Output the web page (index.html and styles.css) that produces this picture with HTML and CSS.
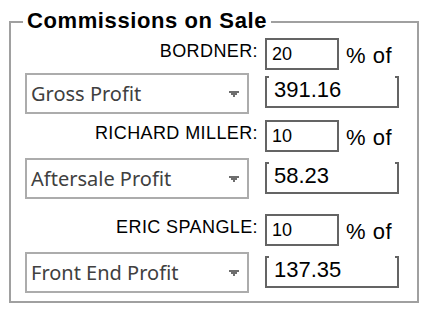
FILE: index.html
```html
<!DOCTYPE html>
<html>
  <head>
    <meta http-equiv="Content-Type" content="text/html; charset=UTF-8">
    <title>Commissions on Sale</title>
    <link rel="stylesheet" href="styles.css">
  </head>

  <body>

    <fieldset id="comisiones">
      <legend>Commissions on Sale</legend>

      <div class="reparto primero">
        <label class="nombre" for="pct1">BORDNER:</label>
        <input type="text" id="pct1" class="pct" value="20" size="3" maxlength="4">
        <span class="de">% of</span>
        <div class="lista">
          <span>Gross Profit</span>
          <svg class="flecha" width="10" height="6" viewBox="0 0 10 6"><polygon points="0,0 10,0 10,2 8,2 8,4 6,4 6,6 4,6 4,4 2,4 2,2 0,2"/></svg>
        </div>
        <div class="importe">391.16</div>
      </div>

      <div class="reparto segundo">
        <label class="nombre" for="pct2">RICHARD MILLER:</label>
        <input type="text" id="pct2" class="pct" value="10" size="3" maxlength="4">
        <span class="de">% of</span>
        <div class="lista">
          <span>Aftersale Profit</span>
          <svg class="flecha" width="10" height="6" viewBox="0 0 10 6"><polygon points="0,0 10,0 10,2 8,2 8,4 6,4 6,6 4,6 4,4 2,4 2,2 0,2"/></svg>
        </div>
        <div class="importe">58.23</div>
      </div>

      <div class="reparto tercero">
        <label class="nombre" for="pct3">ERIC SPANGLE:</label>
        <input type="text" id="pct3" class="pct" value="10" size="3" maxlength="4">
        <span class="de">% of</span>
        <div class="lista">
          <span>Front End Profit</span>
          <svg class="flecha" width="10" height="6" viewBox="0 0 10 6"><polygon points="0,0 10,0 10,2 8,2 8,4 6,4 6,6 4,6 4,4 2,4 2,2 0,2"/></svg>
        </div>
        <div class="importe">137.35</div>
      </div>
    </fieldset>

  </body>
</html>
```

FILE: styles.css
```css
body {
  margin: 0;
  background: #fff;
  font-family: "Liberation Sans", Arial, sans-serif;
  color: #000;
}

#comisiones {
  box-sizing: border-box;
  width: 410px;
  margin: 7px 0 0 9px;
  padding: 0 0 8px 0;
  border: 2px solid #a0a0a0;
}

#comisiones legend {
  margin-left: 12px;
  padding: 0 4px 3px 4px;
  font-size: 22px;
  font-weight: bold;
  line-height: 27px;
  letter-spacing: 0.6px;
}

.reparto {
  display: grid;
  grid-template-columns: 240px 74px auto;
  padding-left: 14px;
}

.primero {
  margin-top: 1px;
  row-gap: 3px;
}

.segundo {
  margin-top: 6px;
  row-gap: 6px;
}

.tercero {
  margin-top: 15px;
  row-gap: 6px;
}

.nombre {
  align-self: start;
  padding: 4px 7px 0 0;
  text-align: right;
  font-size: 18px;
  line-height: 18px;
  letter-spacing: 0.4px;
}

.pct {
  box-sizing: border-box;
  width: 74px;
  height: 32px;
  margin: 0;
  padding: 0 0 0 5px;
  border: 2px solid #646464;
  outline: none;
  font-family: "Liberation Sans", Arial, sans-serif;
  font-size: 18px;
  color: #000;
}

.de {
  align-self: start;
  padding: 7px 0 0 7px;
  font-size: 22px;
  line-height: 22px;
  letter-spacing: 0.5px;
}

.lista {
  box-sizing: border-box;
  width: 224px;
  height: 41px;
  display: flex;
  align-items: center;
  justify-content: space-between;
  padding: 0 8px 0 4px;
  border: 2px solid #acacac;
  font-family: "Noto Sans", sans-serif;
  font-size: 20px;
  color: #404040;
}

.flecha {
  display: block;
  fill: #6e6e6e;
}

.importe {
  grid-column: 2 / 4;
  justify-self: start;
  align-self: start;
  box-sizing: border-box;
  width: 134px;
  height: 32px;
  margin-top: 4px;
  padding: 2px 0 0 7px;
  border: 2px solid #646464;
  border-top: 0;
  background:
    linear-gradient(#646464, #646464) left top / 2px 2px no-repeat,
    linear-gradient(#646464, #646464) right top / 2px 2px no-repeat;
  font-size: 22px;
  line-height: 24px;
}

.primero .importe {
  margin-top: 3px;
}
```
